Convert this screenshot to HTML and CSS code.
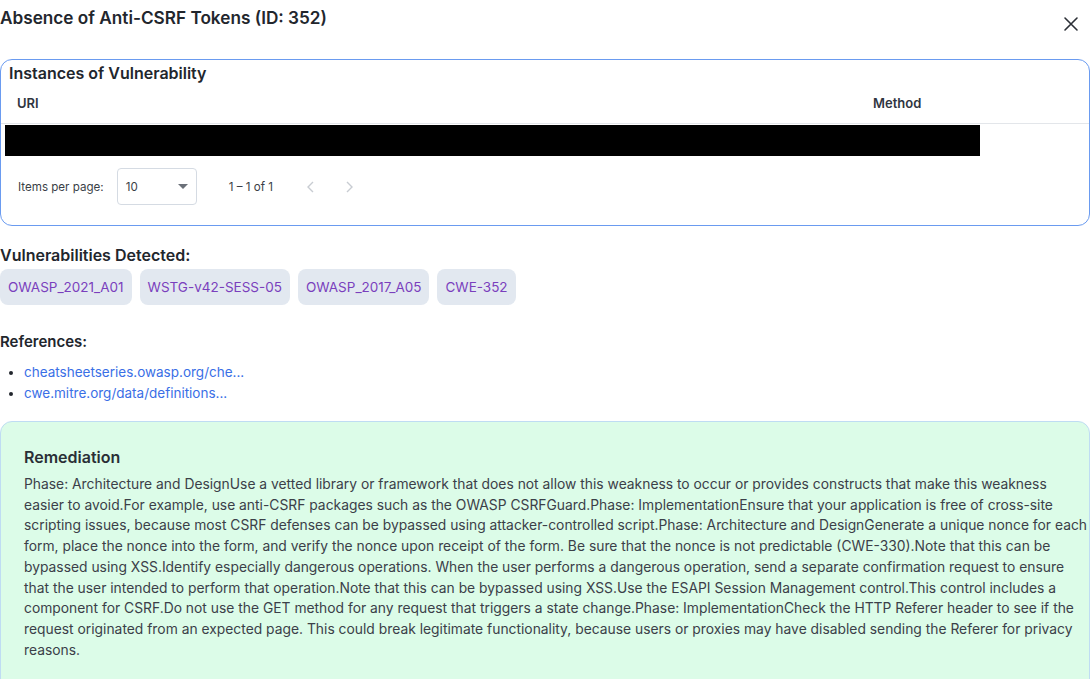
FILE: index.html
```html
<!DOCTYPE html>
<html lang="en">
<head>
<meta charset="utf-8">
<title>Absence of Anti-CSRF Tokens</title>
<link rel="stylesheet" href="styles.css">
</head>
<body>
<div class="dialog">
  <header class="dialog-header">
    <h1 class="dialog-title">Absence of Anti-CSRF Tokens (ID: 352)</h1>
    <button class="close-btn" aria-label="Close">
      <svg width="16" height="16" viewBox="0 0 16 16"><path d="M2 2 L14 14 M14 2 L2 14" stroke="#2b2f36" stroke-width="1.6" stroke-linecap="round" fill="none"/></svg>
    </button>
  </header>

  <section class="instances">
    <h2 class="instances-title">Instances of Vulnerability</h2>
    <div class="table">
      <div class="table-head">
        <div class="col-uri">URI</div>
        <div class="col-method">Method</div>
      </div>
      <div class="table-row">
        <div class="redacted"></div>
      </div>
    </div>
    <div class="paginator">
      <span class="pag-label">Items per page:</span>
      <div class="pag-select">
        <span>10</span>
        <span class="caret"></span>
      </div>
      <span class="pag-range">1 – 1 of 1</span>
      <span class="pag-nav">
        <svg width="12" height="14" viewBox="0 0 12 14"><path d="M8 2 L3 7 L8 12" stroke="#c8ccd2" stroke-width="1.4" fill="none"/></svg>
      </span>
      <span class="pag-nav">
        <svg width="12" height="14" viewBox="0 0 12 14"><path d="M4 2 L9 7 L4 12" stroke="#c8ccd2" stroke-width="1.4" fill="none"/></svg>
      </span>
    </div>
  </section>

  <h3 class="section-heading vuln-heading">Vulnerabilities Detected:</h3>
  <div class="chips">
    <span class="chip">OWASP_2021_A01</span>
    <span class="chip">WSTG-v42-SESS-05</span>
    <span class="chip">OWASP_2017_A05</span>
    <span class="chip">CWE-352</span>
  </div>

  <h3 class="section-heading ref-heading">References:</h3>
  <ul class="refs">
    <li><a href="#">cheatsheetseries.owasp.org/che...</a></li>
    <li><a href="#">cwe.mitre.org/data/definitions...</a></li>
  </ul>

  <section class="remediation">
    <h3 class="rem-title">Remediation</h3>
    <p class="rem-text">Phase: Architecture and DesignUse a vetted library or framework that does not allow this weakness to occur or provides constructs that make this weakness<br>
easier to avoid.For example, use anti-CSRF packages such as the OWASP CSRFGuard.Phase: ImplementationEnsure that your application is free of cross-site<br>
scripting issues, because most CSRF defenses can be bypassed using attacker-controlled script.Phase: Architecture and DesignGenerate a unique nonce for each<br>
form, place the nonce into the form, and verify the nonce upon receipt of the form. Be sure that the nonce is not predictable (CWE-330).Note that this can be<br>
bypassed using XSS.Identify especially dangerous operations. When the user performs a dangerous operation, send a separate confirmation request to ensure<br>
that the user intended to perform that operation.Note that this can be bypassed using XSS.Use the ESAPI Session Management control.This control includes a<br>
component for CSRF.Do not use the GET method for any request that triggers a state change.Phase: ImplementationCheck the HTTP Referer header to see if the<br>
request originated from an expected page. This could break legitimate functionality, because users or proxies may have disabled sending the Referer for privacy<br>
reasons.</p>
  </section>
</div>
</body>
</html>
```

FILE: styles.css
```css
* { box-sizing: border-box; }

html, body {
  margin: 0;
  padding: 0;
  background: #ffffff;
}

body {
  font-family: Inter, "Noto Sans", "Liberation Sans", sans-serif;
  color: #1f2937;
  width: 1090px;
  height: 679px;
  overflow: hidden;
}

.dialog {
  display: flex;
  flex-direction: column;
}

.dialog-header {
  display: flex;
  justify-content: space-between;
  align-items: flex-start;
  height: 59px;
  padding-top: 6px;
}

.dialog-title {
  margin: 0;
  font-size: 17.2px;
  line-height: 24px;
  font-weight: 600;
  color: #22262d;
}

.close-btn {
  border: none;
  background: transparent;
  padding: 0;
  margin: 10px 11px 0 0;
  width: 16px;
  height: 16px;
  display: flex;
}

.instances {
  border: 1.5px solid #6a9bf0;
  border-radius: 12px;
  height: 167px;
  display: flex;
  flex-direction: column;
}

.instances-title {
  margin: 0;
  padding: 2px 0 0 8px;
  font-size: 16px;
  line-height: 22px;
  font-weight: 600;
  color: #22262d;
}

.table-head {
  display: flex;
  align-items: center;
  height: 40px;
  padding-bottom: 2px;
  border-bottom: 1px solid #e3e6ea;
  font-size: 13px;
  font-weight: 600;
  color: #2f3540;
}

.col-uri {
  padding-left: 16px;
  width: 872px;
}

.col-method {
  flex: 1;
}

.table-row {
  padding: 1px 0 0 4px;
}

.redacted {
  width: 975px;
  height: 31px;
  background: #000;
}

.paginator {
  display: flex;
  align-items: center;
  margin-top: 12px;
  padding-left: 17px;
  font-size: 11.6px;
  color: #3a3f47;
}

.pag-label {
  margin-right: 13px;
}

.pag-select {
  width: 80px;
  height: 37px;
  border: 1px solid #d5dbe3;
  border-radius: 4px;
  display: flex;
  align-items: center;
  justify-content: space-between;
  padding: 0 8px 0 8px;
}

.caret {
  width: 0;
  height: 0;
  border-left: 5px solid transparent;
  border-right: 5px solid transparent;
  border-top: 5px solid #6b7079;
}

.pag-range {
  margin-left: 32px;
  margin-right: 32px;
}

.pag-nav {
  display: flex;
  width: 38px;
}

.section-heading {
  margin: 0;
  font-weight: 600;
  color: #22262d;
}

.vuln-heading {
  margin-top: 18px;
  font-size: 16px;
  line-height: 22px;
}

.chips {
  display: flex;
  gap: 8px;
  margin-top: 3px;
}

.chip {
  background: #e2e8f0;
  border-radius: 8px;
  height: 36px;
  padding: 0 8px;
  display: flex;
  align-items: center;
  font-size: 13.5px;
  color: #7a3fbd;
}

.ref-heading {
  margin-top: 26px;
  font-size: 15px;
  line-height: 22px;
}

.refs {
  margin: 9px 0 0 0;
  padding-left: 24px;
  font-size: 13.5px;
  line-height: 21px;
}

.refs li::marker {
  color: #22262d;
}

.refs a {
  color: #3a6fe6;
  text-decoration: none;
}

.remediation {
  margin-top: 17px;
  background: #dcfce8;
  border: 1px solid #bfdcf3;
  border-radius: 12px;
  padding: 24px 0 30px 23px;
}

.rem-title {
  margin: 0;
  font-size: 16px;
  line-height: 22px;
  font-weight: 600;
  color: #2a2f36;
}

.rem-text {
  margin: 6px 0 0 0;
  font-size: 13.85px;
  line-height: 20.7px;
  color: #3b4048;
  white-space: nowrap;
}
```
